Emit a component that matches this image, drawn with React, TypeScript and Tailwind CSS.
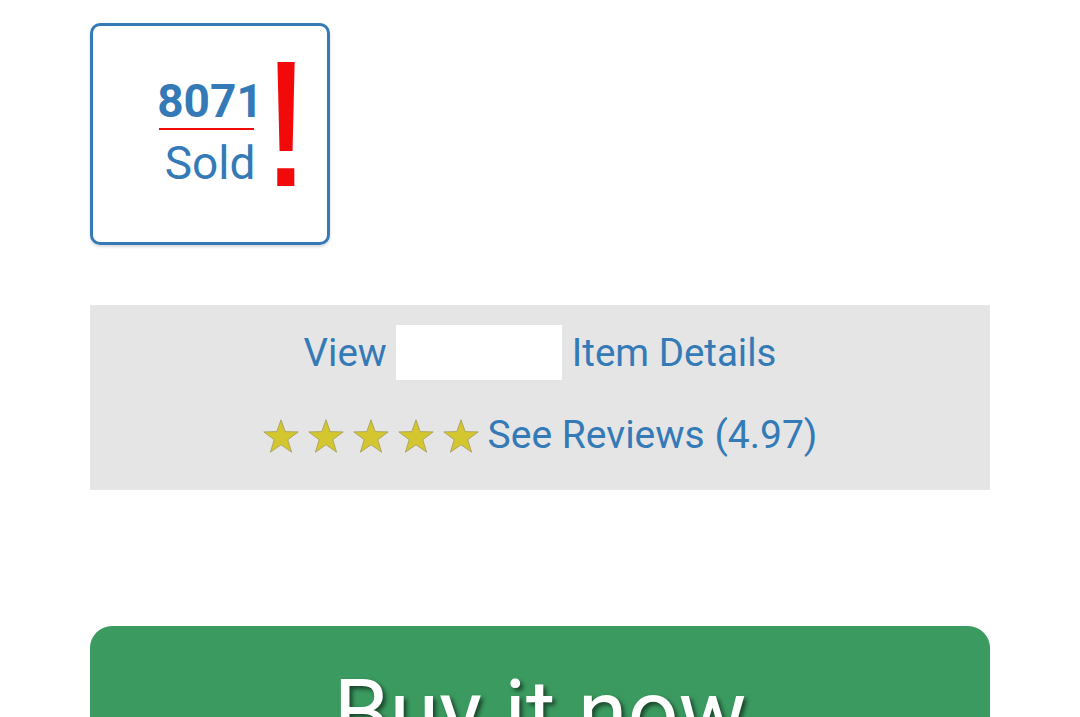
import React from "react";

const Star: React.FC = () => (
  <svg width="36" height="34" viewBox="0 0 36 34" className="shrink-0">
    <polygon
      points="18,0.8 22.2,12.6 35.2,12.9 24.8,20.7 28.6,33.2 18,25.8 7.4,33.2 11.2,20.7 0.8,12.9 13.8,12.6"
      fill="#d4c62f"
      stroke="#a39c5c"
      strokeWidth="0.8"
      strokeLinejoin="round"
    />
  </svg>
);

const App: React.FC = () => {
  return (
    <div className="min-h-[717px] bg-white font-['Roboto',sans-serif] overflow-hidden">
      <div className="w-[900px] mx-auto pt-[23px]">
        {/* sold counter */}
        <div className="relative w-[240px] h-[222px] border-[3px] border-[#337ab7] rounded-[10px] shadow-[0_2px_3px_rgba(0,0,0,0.15)]">
          <div className="flex flex-col items-center pt-[52px] text-[#337ab7]">
            <div className="text-[46px] leading-none font-bold">8071</div>
            <div className="w-[95px] mt-[4px] border-b-2 border-[#f00a0a] -translate-x-[4px]"></div>
            <div className="text-[46px] leading-none mt-[10px]">Sold</div>
          </div>
          <span className="absolute left-[168px] top-[8px] font-['Liberation_Sans',Arial,sans-serif] text-[180px] leading-none text-[#f20a0a]">!</span>
        </div>

        {/* details panel */}
        <div className="mt-[60px] bg-[#e5e5e5] pt-[20px] pb-[27px] text-center text-[38.5px] leading-[55px] text-[#337ab7]">
          <div>
            View <span className="inline-block align-top w-[166px] h-[55px] bg-white"></span> Item Details
          </div>
          <div className="mt-[28px] flex items-center justify-center text-[39px]">
            <div className="flex gap-[9px] mr-[9px]">
              <Star />
              <Star />
              <Star />
              <Star />
              <Star />
            </div>
            <span>See Reviews (4.97)</span>
          </div>
        </div>

        {/* buy button */}
        <div className="mt-[136px] bg-[#3a9a5f] rounded-[22px] pt-[36px] pb-[30px] text-center">
          <span className="text-white text-[90px] leading-[103px] [text-shadow:3px_3px_4px_rgba(0,0,0,0.55)]">
            Buy it now
          </span>
        </div>
      </div>
    </div>
  );
};

export default App;
